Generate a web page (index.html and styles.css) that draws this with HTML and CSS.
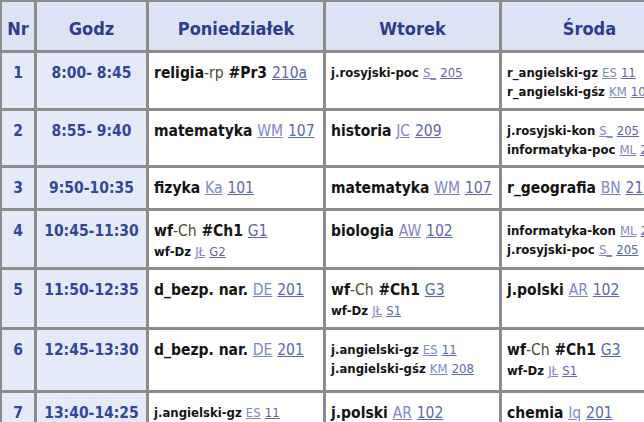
FILE: index.html
```html
<!DOCTYPE html>
<html lang="pl">
<head>
<meta charset="utf-8">
<title>Plan lekcji</title>
<link rel="stylesheet" href="styles.css">
</head>
<body>
<div class="frame">
<table class="plan">
  <tr class="r-head">
    <th class="c-nr">Nr</th>
    <th class="c-godz">Godz</th>
    <th class="c-day">Poniedziałek</th>
    <th class="c-day2">Wtorek</th>
    <th class="c-day3">Środa</th>
  </tr>
  <tr class="r1">
    <td class="nr">1</td>
    <td class="g">8:00- 8:45</td>
    <td class="l"><span class="s">religia</span><span class="grp">-rp</span> <span class="s">#Pr3</span> <a class="sa">210a</a></td>
    <td class="l"><div class="sm"><span class="s">j.rosyjski-poc</span> <a class="n">S_</a> <a class="sa">205</a></div></td>
    <td class="l"><div class="sm"><span class="s">r_angielski-gz</span> <a class="n">ES</a> <a class="sa">11</a></div><div class="sm"><span class="s">r_angielski-gśz</span> <a class="n">KM</a> <a class="sa">108</a></div></td>
  </tr>
  <tr class="r2">
    <td class="nr">2</td>
    <td class="g">8:55- 9:40</td>
    <td class="l"><span class="s">matematyka</span> <a class="n">WM</a> <a class="sa">107</a></td>
    <td class="l"><span class="s">historia</span> <a class="n">JC</a> <a class="sa">209</a></td>
    <td class="l"><div class="sm"><span class="s">j.rosyjski-kon</span> <a class="n">S_</a> <a class="sa">205</a></div><div class="sm"><span class="s">informatyka-poc</span> <a class="n">ML</a> <a class="sa">210</a></div></td>
  </tr>
  <tr class="r3">
    <td class="nr">3</td>
    <td class="g">9:50-10:35</td>
    <td class="l"><span class="s">fizyka</span> <a class="n">Ka</a> <a class="sa">101</a></td>
    <td class="l"><span class="s">matematyka</span> <a class="n">WM</a> <a class="sa">107</a></td>
    <td class="l"><span class="s">r_geografia</span> <a class="n">BN</a> <a class="sa">210</a></td>
  </tr>
  <tr class="r4">
    <td class="nr">4</td>
    <td class="g">10:45-11:30</td>
    <td class="l"><div><span class="s">wf</span><span class="grp">-Ch</span> <span class="s">#Ch1</span> <a class="sa">G1</a></div><div class="sm"><span class="s">wf-Dz</span> <a class="n">JŁ</a> <a class="sa">G2</a></div></td>
    <td class="l"><span class="s">biologia</span> <a class="n">AW</a> <a class="sa">102</a></td>
    <td class="l"><div class="sm"><span class="s">informatyka-kon</span> <a class="n">ML</a> <a class="sa">210</a></div><div class="sm"><span class="s">j.rosyjski-poc</span> <a class="n">S_</a> <a class="sa">205</a></div></td>
  </tr>
  <tr class="r5">
    <td class="nr">5</td>
    <td class="g">11:50-12:35</td>
    <td class="l"><span class="s">d_bezp. nar.</span> <a class="n">DE</a> <a class="sa">201</a></td>
    <td class="l"><div><span class="s">wf</span><span class="grp">-Ch</span> <span class="s">#Ch1</span> <a class="sa">G3</a></div><div class="sm"><span class="s">wf-Dz</span> <a class="n">JŁ</a> <a class="sa">S1</a></div></td>
    <td class="l"><span class="s">j.polski</span> <a class="n">AR</a> <a class="sa">102</a></td>
  </tr>
  <tr class="r6">
    <td class="nr">6</td>
    <td class="g">12:45-13:30</td>
    <td class="l"><span class="s">d_bezp. nar.</span> <a class="n">DE</a> <a class="sa">201</a></td>
    <td class="l"><div class="sm"><span class="s">j.angielski-gz</span> <a class="n">ES</a> <a class="sa">11</a></div><div class="sm"><span class="s">j.angielski-gśz</span> <a class="n">KM</a> <a class="sa">208</a></div></td>
    <td class="l"><div><span class="s">wf</span><span class="grp">-Ch</span> <span class="s">#Ch1</span> <a class="sa">G3</a></div><div class="sm"><span class="s">wf-Dz</span> <a class="n">JŁ</a> <a class="sa">S1</a></div></td>
  </tr>
  <tr class="r7">
    <td class="nr">7</td>
    <td class="g">13:40-14:25</td>
    <td class="l"><div class="sm"><span class="s">j.angielski-gz</span> <a class="n">ES</a> <a class="sa">11</a></div></td>
    <td class="l"><span class="s">j.polski</span> <a class="n">AR</a> <a class="sa">102</a></td>
    <td class="l"><span class="s">chemia</span> <a class="n">Iq</a> <a class="sa">201</a></td>
  </tr>
</table>
</div>
</body>
</html>
```

FILE: styles.css
```css
html, body {
  margin: 0;
  padding: 0;
  background: #ffffff;
}

.frame {
  width: 644px;
  height: 422px;
  overflow: hidden;
}

.plan {
  table-layout: fixed;
  width: 680px;
  border-collapse: separate;
  border-spacing: 0;
  border-left: 2px solid #8c8c8c;
  border-top: 2px solid #8c8c8c;
  font-family: "DejaVu Sans Condensed", "DejaVu Sans", sans-serif;
  font-weight: bold;
  font-size: 15.5px;
  color: #141414;
}

.plan th,
.plan td {
  box-sizing: border-box;
  border-right: 3px solid #8c8c8c;
  border-bottom: 3px solid #8c8c8c;
  padding: 0;
  white-space: nowrap;
  overflow: hidden;
}

.plan th {
  background: #dce3f4;
  color: #2e3d8e;
  font-size: 18px;
  text-align: center;
  vertical-align: middle;
  padding-top: 5px;
}

.c-nr { width: 35px; }
.c-godz { width: 112px; }
.c-day { width: 177px; }
.c-day2 { width: 176px; }
.c-day3 { width: 178px; }

.r-head th { height: 51px; }
.r1 td { height: 58px; }
.r2 td { height: 57px; }
.r3 td { height: 43px; }
.r4 td { height: 59px; }
.r5 td { height: 60px; }
.r6 td { height: 63px; }
.r7 td { height: 57px; }

.plan td {
  vertical-align: top;
  padding-top: 10px;
  line-height: 21px;
}

.plan td.nr,
.plan td.g {
  background: #e5eaf8;
  color: #34469a;
  text-align: center;
}

.plan td.l {
  padding-left: 5px;
  background: #ffffff;
}

.sm {
  font-size: 13px;
  line-height: 19px;
}

.grp {
  font-weight: normal;
  color: #4d4a30;
}

.n,
.sa {
  font-weight: normal;
  text-decoration: underline;
}

.n {
  color: #7c88c6;
}

.sa {
  color: #5a68ab;
}
```
